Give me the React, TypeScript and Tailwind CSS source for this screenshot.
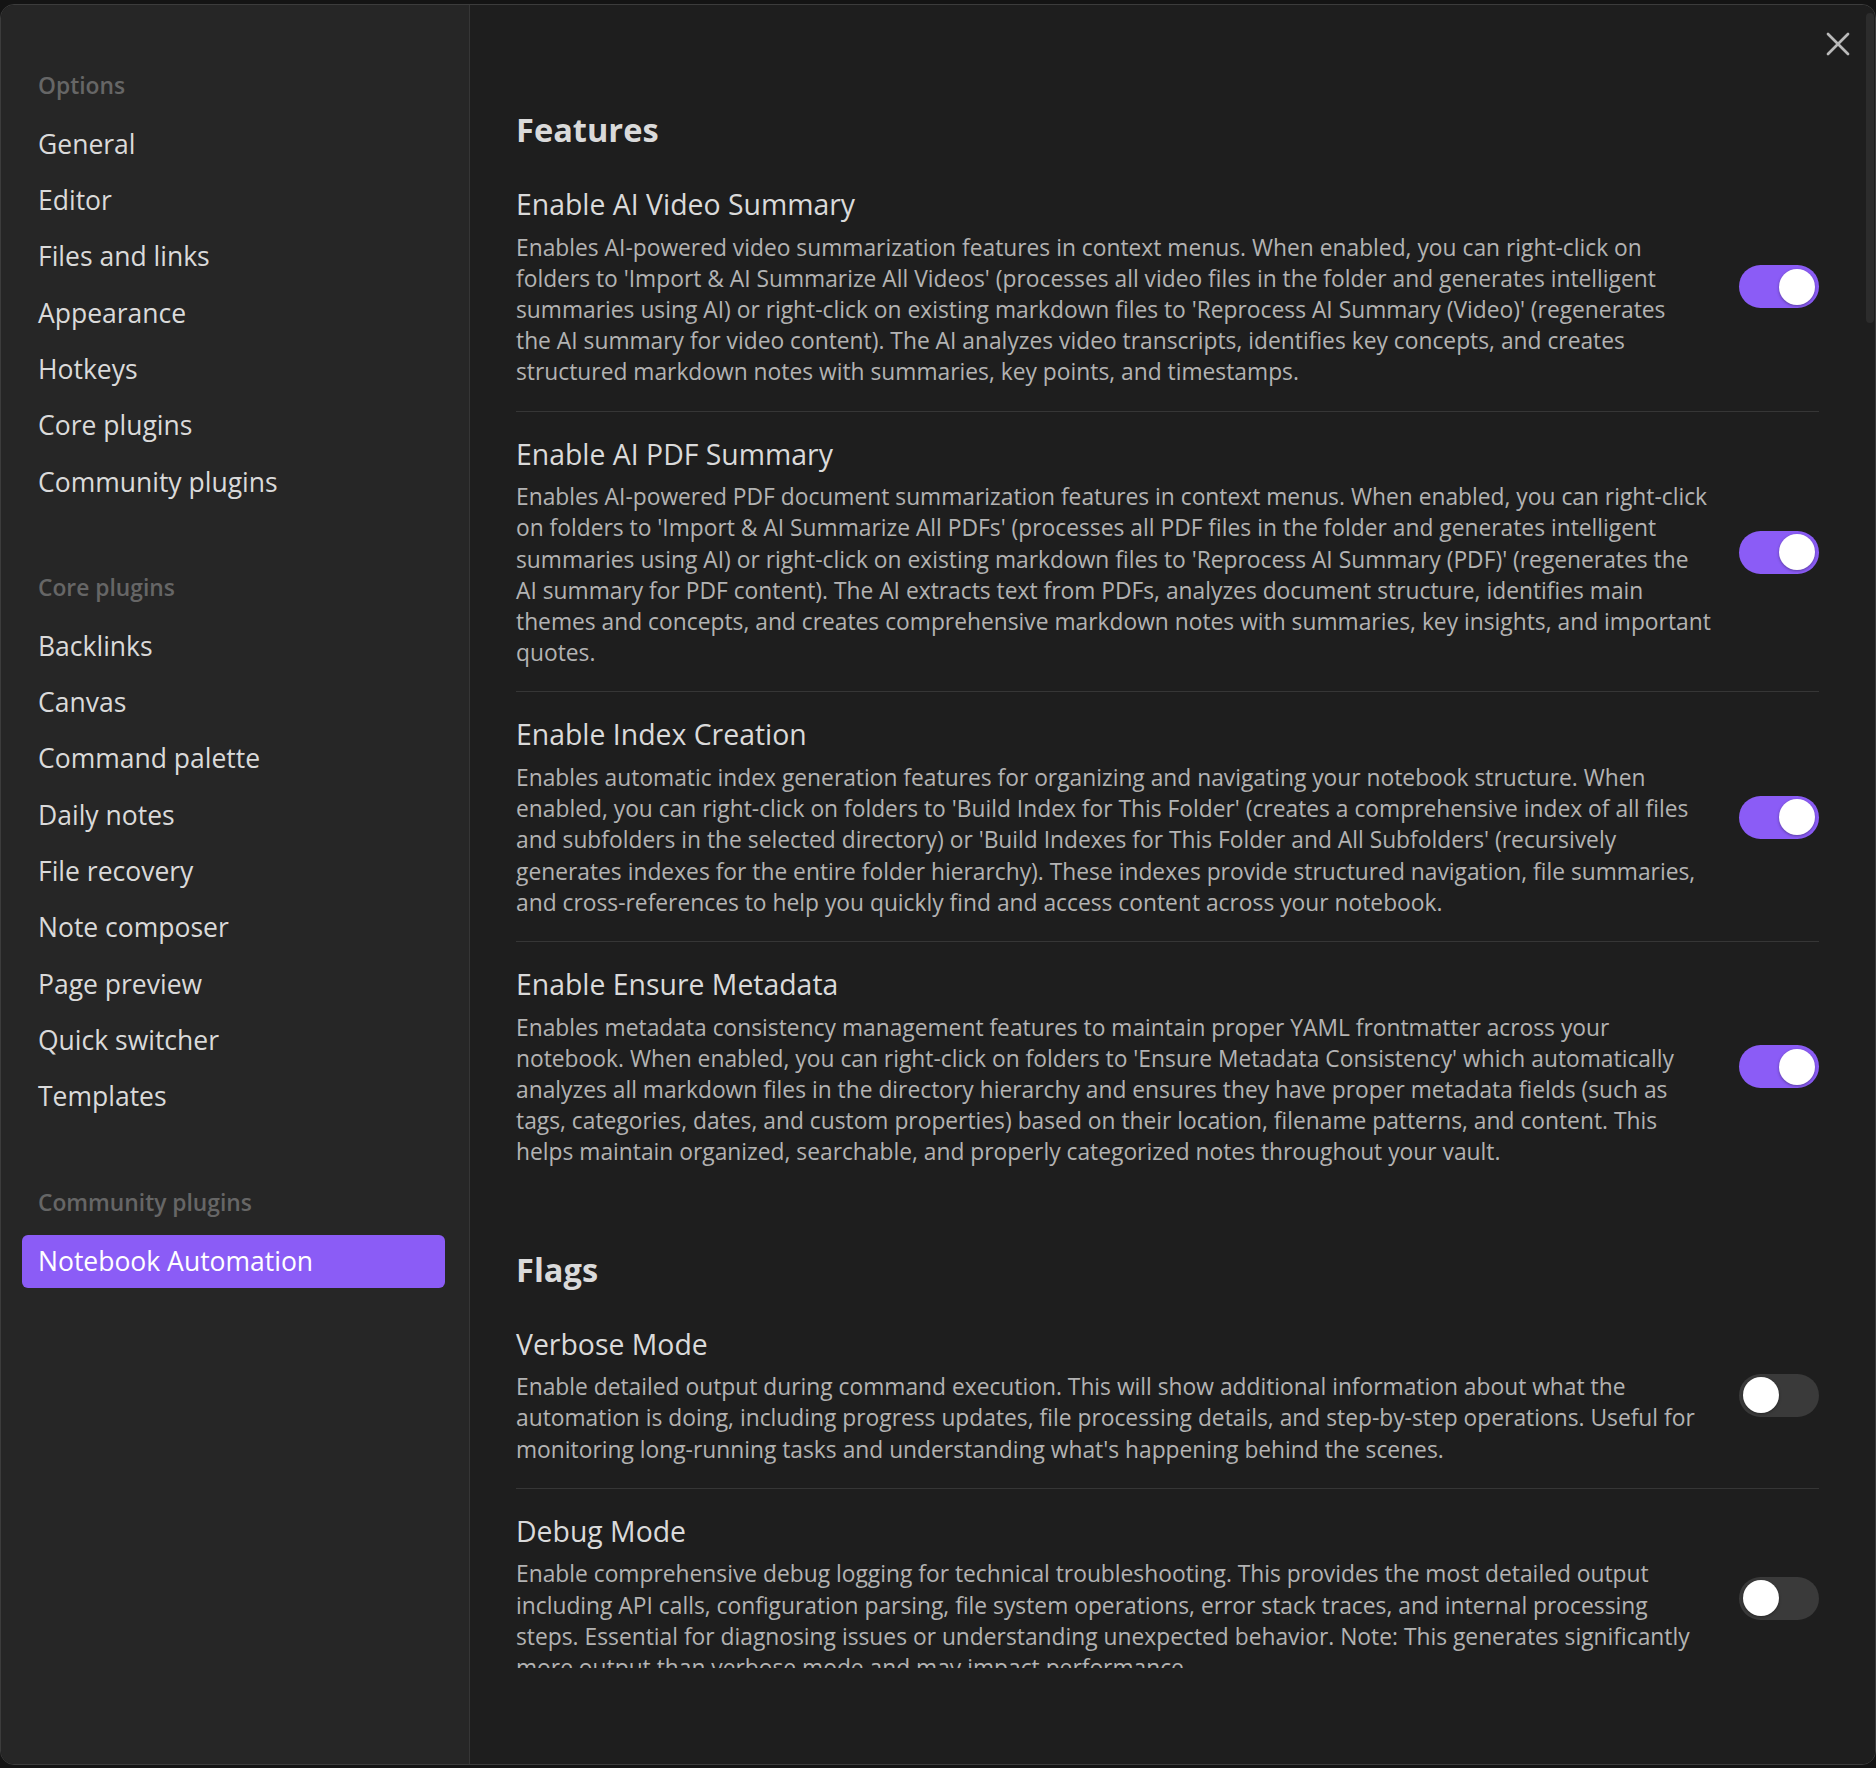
import { X } from "lucide-react";

type Setting = {
  name: string;
  lines: string[];
  on: boolean;
};

const optionItems = ["General", "Editor", "Files and links", "Appearance", "Hotkeys", "Core plugins", "Community plugins"];
const coreItems = [
  "Backlinks",
  "Canvas",
  "Command palette",
  "Daily notes",
  "File recovery",
  "Note composer",
  "Page preview",
  "Quick switcher",
  "Templates",
];

const features: Setting[] = [
  {
    name: "Enable AI Video Summary",
    on: true,
    lines: [
      "Enables AI-powered video summarization features in context menus. When enabled, you can right-click on",
      "folders to 'Import & AI Summarize All Videos' (processes all video files in the folder and generates intelligent",
      "summaries using AI) or right-click on existing markdown files to 'Reprocess AI Summary (Video)' (regenerates",
      "the AI summary for video content). The AI analyzes video transcripts, identifies key concepts, and creates",
      "structured markdown notes with summaries, key points, and timestamps.",
    ],
  },
  {
    name: "Enable AI PDF Summary",
    on: true,
    lines: [
      "Enables AI-powered PDF document summarization features in context menus. When enabled, you can right-click",
      "on folders to 'Import & AI Summarize All PDFs' (processes all PDF files in the folder and generates intelligent",
      "summaries using AI) or right-click on existing markdown files to 'Reprocess AI Summary (PDF)' (regenerates the",
      "AI summary for PDF content). The AI extracts text from PDFs, analyzes document structure, identifies main",
      "themes and concepts, and creates comprehensive markdown notes with summaries, key insights, and important",
      "quotes.",
    ],
  },
  {
    name: "Enable Index Creation",
    on: true,
    lines: [
      "Enables automatic index generation features for organizing and navigating your notebook structure. When",
      "enabled, you can right-click on folders to 'Build Index for This Folder' (creates a comprehensive index of all files",
      "and subfolders in the selected directory) or 'Build Indexes for This Folder and All Subfolders' (recursively",
      "generates indexes for the entire folder hierarchy). These indexes provide structured navigation, file summaries,",
      "and cross-references to help you quickly find and access content across your notebook.",
    ],
  },
  {
    name: "Enable Ensure Metadata",
    on: true,
    lines: [
      "Enables metadata consistency management features to maintain proper YAML frontmatter across your",
      "notebook. When enabled, you can right-click on folders to 'Ensure Metadata Consistency' which automatically",
      "analyzes all markdown files in the directory hierarchy and ensures they have proper metadata fields (such as",
      "tags, categories, dates, and custom properties) based on their location, filename patterns, and content. This",
      "helps maintain organized, searchable, and properly categorized notes throughout your vault.",
    ],
  },
];

const flags: Setting[] = [
  {
    name: "Verbose Mode",
    on: false,
    lines: [
      "Enable detailed output during command execution. This will show additional information about what the",
      "automation is doing, including progress updates, file processing details, and step-by-step operations. Useful for",
      "monitoring long-running tasks and understanding what's happening behind the scenes.",
    ],
  },
  {
    name: "Debug Mode",
    on: false,
    lines: [
      "Enable comprehensive debug logging for technical troubleshooting. This provides the most detailed output",
      "including API calls, configuration parsing, file system operations, error stack traces, and internal processing",
      "steps. Essential for diagnosing issues or understanding unexpected behavior. Note: This generates significantly",
      "more output than verbose mode and may impact performance.",
    ],
  },
];

function NavGroup({ title, items, active, first }: { title: string; items: string[]; active?: string; first?: boolean }) {
  return (
    <div className={first ? "" : "mt-[61px]"}>
      <div className="h-[36px] leading-[36px] pl-[16px] text-[22.8px] font-semibold text-[#666666] mb-[14px]">{title}</div>
      <ul className="flex flex-col gap-[3px]">
        {items.map((item) => (
          <li
            key={item}
            className={`h-[53.3px] flex items-center pl-[16px] rounded-[6px] text-[26.5px] ${
              item === active ? "bg-[#8b5cf6] text-white" : "text-[#dadada]"
            }`}
          >
            {item}
          </li>
        ))}
      </ul>
    </div>
  );
}

function Toggle({ on }: { on: boolean }) {
  return (
    <div
      className={`shrink-0 w-[80px] h-[43px] rounded-full flex items-center px-[4px] ${
        on ? "bg-[#8b5cf6] justify-end" : "bg-[#3a3a3a] justify-start"
      }`}
    >
      <div className="w-[36px] h-[36px] rounded-full bg-white shadow-[0_1px_3px_rgba(0,0,0,0.35)]" />
    </div>
  );
}

function SettingRow({ setting, first }: { setting: Setting; first: boolean }) {
  return (
    <div className={`flex items-center gap-[28px] pt-[24px] pb-[23px] ${first ? "" : "border-t border-[#363636]"}`}>
      <div className="flex-1 min-w-0">
        <div className="h-[36px] leading-[36px] text-[28.4px] text-[#dadada]">{setting.name}</div>
        <div className="mt-[9.6px] text-[22.8px] leading-[31.2px] text-[#b3b3b3] whitespace-nowrap">
          {setting.lines.map((line, i) => (
            <div key={i}>{line}</div>
          ))}
        </div>
      </div>
      <Toggle on={setting.on} />
    </div>
  );
}

function Section({ title, settings, first }: { title: string; settings: Setting[]; first?: boolean }) {
  return (
    <section className={first ? "" : "mt-[59px]"}>
      <h2 className="h-[40px] leading-[40px] text-[32.6px] font-bold text-[#dadada] mb-[12px]">{title}</h2>
      {settings.map((s, i) => (
        <SettingRow key={s.name} setting={s} first={i === 0} />
      ))}
    </section>
  );
}

export default function App() {
  return (
    <div className="w-[1876px] h-[1768px] bg-[#141414] pt-[4px] overflow-hidden" style={{ fontFamily: '"Open Sans", "Noto Sans", sans-serif' }}>
      <div className="relative h-[1761px] w-full flex rounded-[14px] border border-[#3c3c3c] overflow-hidden">
        {/* sidebar */}
        <aside className="w-[469px] shrink-0 bg-[#262626] border-r border-[#363636] pt-[63px] pl-[21px] pr-[24px]">
          <NavGroup title="Options" items={optionItems} first />
          <NavGroup title="Core plugins" items={coreItems} />
          <NavGroup title="Community plugins" items={["Notebook Automation"]} active="Notebook Automation" />
        </aside>

        {/* content */}
        <main className="relative flex-1 bg-[#1e1e1e]">
          <div className="h-[1663px] overflow-hidden pl-[46px] pr-[56px] pt-[105px]">
            <Section title="Features" settings={features} first />
            <Section title="Flags" settings={flags} />
          </div>

          <button className="absolute top-[19px] right-[17px] w-[40px] h-[40px] flex items-center justify-center text-[#bababa]">
            <X size={40} strokeWidth={1.6} />
          </button>

          <div className="absolute top-[8px] right-[1px] w-[8px] h-[310px] rounded-full bg-[#2c2c2c]" />
        </main>
      </div>
    </div>
  );
}
